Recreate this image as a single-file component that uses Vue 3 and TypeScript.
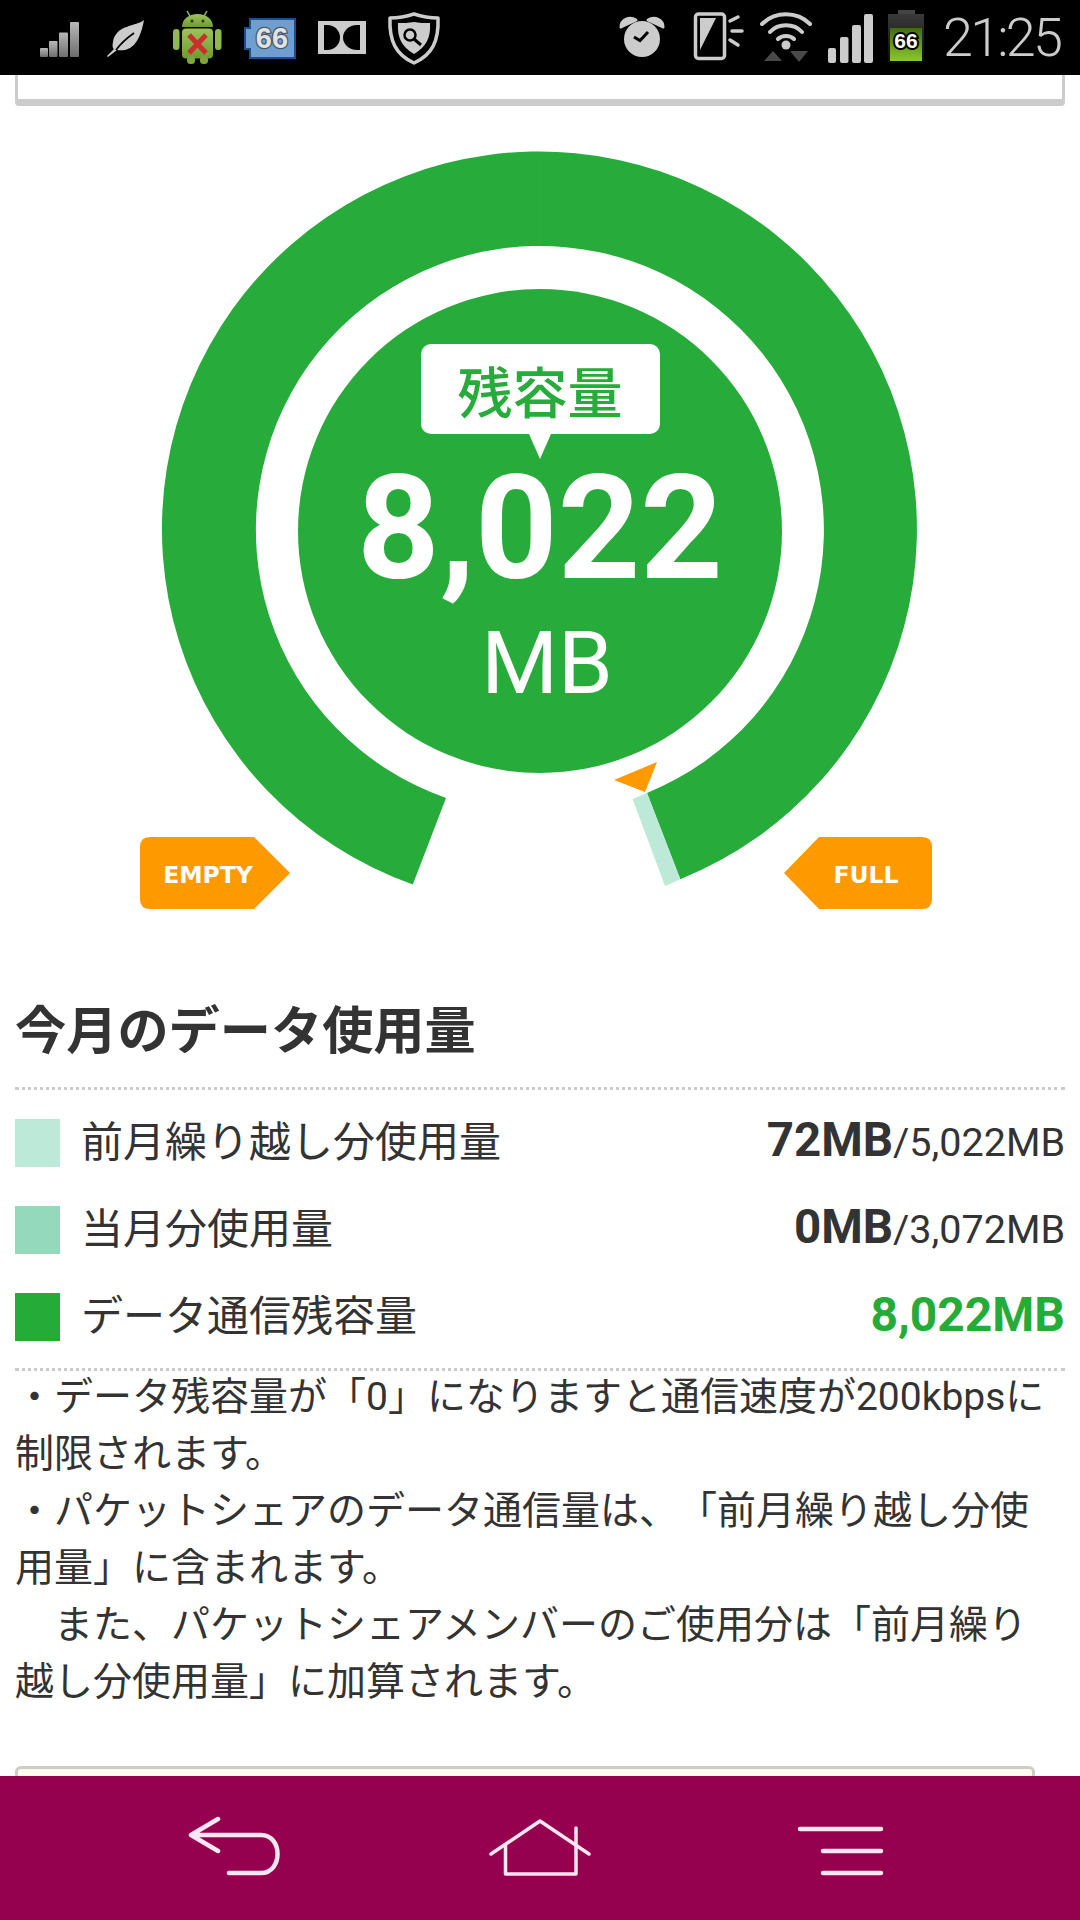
<script setup lang="ts">
interface UsageRow {
  label: string
  color: string
  used: string
  total?: string
}
const rows: UsageRow[] = [
  { label: '前月繰り越し分使用量', color: '#bde9d8', used: '72MB', total: '/5,022MB' },
  { label: '当月分使用量', color: '#95d9bd', used: '0MB', total: '/3,072MB' },
  { label: 'データ通信残容量', color: '#24ab38', used: '8,022MB' },
]
</script>

<template>
  <div class="screen">
    <header class="status">
      <div class="status-group">
        <svg class="cell" viewBox="24 0 72 75" width="72" height="75">
          <defs>
            <linearGradient id="sig" x1="0" y1="0" x2="0" y2="1">
              <stop offset="0" stop-color="#b8b8b8" />
              <stop offset="1" stop-color="#6e6e6e" />
            </linearGradient>
          </defs>
          <rect x="40" y="48" width="8" height="9" rx="1" fill="url(#sig)" />
          <rect x="49" y="41" width="8.5" height="16" rx="1" fill="url(#sig)" />
          <rect x="59" y="32.5" width="9" height="24.5" rx="1" fill="url(#sig)" />
          <rect x="70" y="22" width="9" height="35" rx="1" fill="url(#sig)" />
        </svg>
        <svg class="cell" viewBox="96 0 72 75" width="72" height="75">
          <path d="M144 20C136 27 116 24 113 42C112 46 113 49 114 49L107 56L108 57L117 50C135 53 141 36 144 20Z" fill="#ccc" />
          <path d="M116 50C121 43 127 38 134 33" fill="none" stroke="#000" stroke-width="1.6" />
        </svg>
        <svg class="cell" viewBox="168 0 72 75" width="72" height="75">
          <defs>
            <linearGradient id="droid" x1="0" y1="0" x2="0" y2="1">
              <stop offset="0" stop-color="#9cc45a" />
              <stop offset="1" stop-color="#6f9a35" />
            </linearGradient>
          </defs>
          <path d="M187 11L190 16M207 11L204 16" stroke="#8aa85a" stroke-width="1.5" />
          <path d="M182 27C182 19 189 14 197.5 14C206 14 213 19 213 27Z" fill="url(#droid)" />
          <circle cx="192" cy="21" r="1.5" fill="#2b3a12" />
          <circle cx="203" cy="21" r="1.5" fill="#2b3a12" />
          <rect x="182" y="28.5" width="31" height="30" rx="4" fill="url(#droid)" />
          <rect x="173" y="29" width="6.5" height="21" rx="3.2" fill="#8fb94f" />
          <rect x="215" y="29" width="6.5" height="21" rx="3.2" fill="#8fb94f" />
          <rect x="187" y="56" width="8" height="8" rx="3.5" fill="#7ea43f" />
          <rect x="200" y="56" width="8" height="8" rx="3.5" fill="#7ea43f" />
          <path d="M189 35L206 53M206 35L189 53" stroke="#c9302c" stroke-width="5" />
        </svg>
        <svg class="cell" viewBox="240 0 72 75" width="72" height="75">
          <path d="M250 19H295V58H250V49H245V28H250Z" fill="#6f9fd1" stroke="#1d4e8f" stroke-width="2" />
          <text x="272" y="48" text-anchor="middle" class="badge-num">66</text>
        </svg>
        <svg class="cell" viewBox="312 0 72 75" width="72" height="75">
          <rect x="318" y="21" width="48" height="33" fill="#ccc" />
          <path d="M324 25H327C335 25 340 31 340 37.5C340 44 335 50 327 50H324Z" fill="#000" />
          <path d="M360 25H357C349 25 343 31 343 37.5C343 44 349 50 357 50H360Z" fill="#000" />
        </svg>
        <svg class="cell" viewBox="384 0 72 75" width="72" height="75">
          <path d="M414 14C405 17 398 18 390 18C389 41 396 55 414 63C432 55 439 41 438 18C430 18 423 17 414 14Z" fill="none" stroke="#ccc" stroke-width="3.5" stroke-linejoin="round" />
          <path d="M414 22C409 23 403 23 398 23C397 38 402 47 414 54C426 47 431 38 430 23C425 23 419 23 414 22Z" fill="#ccc" />
          <circle cx="410" cy="35" r="5.5" fill="none" stroke="#000" stroke-width="2.5" />
          <path d="M414 39L421 45" stroke="#000" stroke-width="3" />
        </svg>
      </div>
      <div class="status-group">
        <svg class="cell" viewBox="612 0 72 75" width="72" height="75">
          <circle cx="642" cy="39" r="18" fill="#ccc" />
          <path d="M621 27C621 20 629 16 636 20ZM663 27C663 20 655 16 648 20Z" fill="#ccc" stroke="#ccc" stroke-width="3" stroke-linejoin="round" />
          <path d="M634 37L640 40.5L648 32" fill="none" stroke="#000" stroke-width="3" />
        </svg>
        <svg class="cell" viewBox="684 0 68 75" width="68" height="75">
          <rect x="695.5" y="14" width="29" height="44.5" rx="3" fill="none" stroke="#ccc" stroke-width="3.5" />
          <path d="M700 18H716L700 50Z" fill="#ccc" />
          <path d="M730 21L738 17M732 31H742M730 40L738 45" stroke="#ccc" stroke-width="3.5" stroke-linecap="round" />
        </svg>
        <svg class="cell" viewBox="752 0 68 75" width="68" height="75">
          <path d="M762 24C775 11 797 11 810 24M770 32C778 23 794 23 802 32M778 39C782 35 790 35 794 39" fill="none" stroke="#ccc" stroke-width="4" stroke-linecap="round" />
          <circle cx="786" cy="45" r="4.5" fill="#ccc" />
          <path d="M764 61H782L773 51Z" fill="#4a4a4a" />
          <path d="M790 51H808L799 62Z" fill="#4a4a4a" />
        </svg>
        <svg class="cell" viewBox="820 0 60 75" width="60" height="75">
          <rect x="828" y="48" width="8" height="15" rx="2" fill="#ccc" />
          <rect x="840" y="37" width="8.5" height="26" rx="2" fill="#ccc" />
          <rect x="852" y="25" width="9" height="38" rx="2" fill="#ccc" />
          <rect x="864" y="14" width="9" height="49" rx="2" fill="#ccc" />
        </svg>
        <svg class="cell" viewBox="880 0 50 75" width="50" height="75">
          <defs>
            <linearGradient id="cellTop" x1="0" y1="0" x2="0" y2="1">
              <stop offset="0" stop-color="#3a3a3a" />
              <stop offset="1" stop-color="#0a0a0a" />
            </linearGradient>
            <linearGradient id="cellLow" x1="0" y1="0" x2="0" y2="1">
              <stop offset="0" stop-color="#3f6b10" />
              <stop offset="1" stop-color="#8cc82c" />
            </linearGradient>
          </defs>
          <rect x="898" y="10" width="17" height="5" fill="#444" />
          <rect x="888" y="14" width="36" height="49" fill="url(#cellTop)" />
          <rect x="890" y="28" width="32" height="33" fill="url(#cellLow)" />
          <text x="906" y="48" text-anchor="middle" class="cell-num">66</text>
        </svg>
        <span class="time">21:25</span>
      </div>
    </header>

    <main class="page">
      <div class="prev-card"></div>

      <section class="gauge">
        <svg class="gauge-art" viewBox="0 106 1080 884" width="1080" height="884">
          <path d="M412.8 884.6A377.5 377.5 0 1 1 680.3 879.2L647 793A284 284 0 1 0 446 798Z" fill="#27ab3a" />
          <path d="M540 153V244" stroke="#2cad3f" stroke-width="1" />
          <circle cx="540" cy="531" r="242" fill="#27ab3a" />
          <path d="M632.6 799L647 793L680.3 879.2L665 886Z" fill="#bde9d8" />
          <path d="M614 780L657 762L645 792Z" fill="#ff9900" />
          <path d="M150 837H254L290 873L254 909H150Q140 909 140 899V847Q140 837 150 837Z" fill="#ff9900" />
          <path d="M922 837H819L784 873L819 909H922Q932 909 932 899V847Q932 837 922 837Z" fill="#ff9900" />
          <text x="208" y="883" text-anchor="middle" class="flag">EMPTY</text>
          <text x="866" y="883" text-anchor="middle" class="flag">FULL</text>
        </svg>
        <div class="gauge-center">
          <div class="bubble">残容量</div>
          <div class="big">8,022</div>
          <div class="unit">MB</div>
        </div>
      </section>

      <h2 class="title">今月のデータ使用量</h2>

      <ul class="usage">
        <li v-for="row in rows" :key="row.label" class="usage-row">
          <span class="swatch" :style="{ background: row.color }"></span>
          <span class="label">{{ row.label }}</span>
          <span class="value">
            <b :class="{ remain: !row.total }">{{ row.used }}</b><small v-if="row.total">{{ row.total }}</small>
          </span>
        </li>
      </ul>

      <div class="notes">
        <p>・データ残容量が「0」になりますと通信速度が200kbpsに制限されます。</p>
        <p>・パケットシェアのデータ通信量は、「前月繰り越し分使用量」に含まれます。</p>
        <p>　また、パケットシェアメンバーのご使用分は「前月繰り越し分使用量」に加算されます。</p>
      </div>

      <div class="next-card"></div>
    </main>

    <nav class="nav">
      <svg viewBox="184 1816 100 64" width="100" height="64">
        <path d="M218 1819L191 1835L218 1851M191 1835H261C283 1835 283 1873 261 1873H229" class="nav-stroke" />
      </svg>
      <svg viewBox="485 1816 110 64" width="110" height="64">
        <path d="M491 1854L540 1821L589 1854" class="nav-stroke thin" />
        <path d="M505.5 1845V1874H576V1828" class="nav-stroke thin" />
      </svg>
      <svg viewBox="796 1816 92 64" width="92" height="64">
        <path d="M800 1829H881M823 1851H881M823 1873H881" class="nav-stroke" />
      </svg>
    </nav>
  </div>
</template>

<style>
html,
body {
  margin: 0;
  background: #fff;
}
</style>

<style scoped>
.screen {
  width: 1080px;
  height: 1920px;
  display: flex;
  flex-direction: column;
  overflow: hidden;
  background: #fff;
  color: #333;
  font-family: "Noto Sans CJK JP", Roboto, sans-serif;
}

.status {
  flex: 0 0 75px;
  display: flex;
  justify-content: space-between;
  padding-left: 24px;
  padding-right: 21px;
  background: #000;
}
.status-group {
  display: flex;
  align-items: center;
}
.cell {
  display: block;
}
.badge-num {
  font: 700 29px "Liberation Sans", sans-serif;
  fill: #dfe3e8;
  stroke: #4d5660;
  stroke-width: 2.5px;
  paint-order: stroke;
}
.cell-num {
  font: 700 21px "Liberation Sans", sans-serif;
  fill: #fff;
  stroke: #000;
  stroke-width: 4px;
  paint-order: stroke;
}
.time {
  margin-left: 13px;
  width: 116px;
  font: 300 54px Roboto, sans-serif;
  letter-spacing: -2.8px;
  color: #ccc;
  white-space: nowrap;
}

.page {
  flex: 1;
  min-height: 0;
  overflow: hidden;
}
.prev-card {
  height: 24px;
  margin: 0 15px;
  border: solid #ccc;
  border-width: 0 3px 7px;
  border-radius: 0 0 4px 4px;
  box-sizing: content-box;
}

.gauge {
  position: relative;
  height: 884px;
}
.gauge-art {
  display: block;
}
.flag {
  font: 700 23.5px "DejaVu Sans", sans-serif;
  fill: #fff;
}
.gauge-center {
  position: absolute;
  top: 238px;
  left: 0;
  right: 0;
  display: flex;
  flex-direction: column;
  align-items: center;
  color: #fff;
}
.bubble {
  position: relative;
  width: 239px;
  height: 90px;
  border-radius: 10px;
  background: #fff;
  color: #27ab3a;
  font-size: 55px;
  font-weight: 500;
  line-height: 90px;
  text-align: center;
}
.bubble::after {
  content: "";
  position: absolute;
  top: 90px;
  left: 108px;
  border-style: solid;
  border-width: 25px 11px 0;
  border-color: #fff transparent transparent;
}
.big {
  margin-top: 40px;
  font: 700 144px/110px Roboto, sans-serif;
}
.unit {
  margin-top: 35px;
  padding-left: 14px;
  font: 400 88px/88px Roboto, sans-serif;
}

.title {
  margin: 0;
  padding: 0 15px;
  height: 97px;
  font-size: 51.2px;
  font-weight: 700;
  line-height: 75px;
  white-space: nowrap;
}

.usage {
  list-style: none;
  margin: 0 15px;
  padding: 9px 0 8px;
  border-top: 3px dotted #ccc;
  border-bottom: 3px dotted #ccc;
}
.usage-row {
  display: flex;
  align-items: center;
  height: 87px;
}
.swatch {
  flex: 0 0 45px;
  height: 48px;
}
.label {
  margin-left: 21px;
  margin-top: -9px;
  font-size: 42px;
  white-space: nowrap;
}
.value {
  margin-left: auto;
  margin-top: -5px;
  font-family: Roboto, sans-serif;
  white-space: nowrap;
}
.value b {
  font-size: 47.5px;
  font-weight: 700;
}
.value b.remain {
  font-size: 48px;
  color: #24ab38;
}
.value small {
  font-size: 39.5px;
  font-weight: 400;
}

.notes {
  margin-top: -2px;
  padding: 0 15px;
  font-family: Roboto, "Noto Sans CJK JP", sans-serif;
  font-size: 39px;
  line-height: 57px;
  text-spacing-trim: space-all;
}
.notes p {
  margin: 0;
}

.next-card {
  margin: 55px 45px 0 15px;
  height: 60px;
  border: 3px solid #cdcdc6;
  border-radius: 6px;
  background: #fbfbf0;
}

.nav {
  flex: 0 0 144px;
  display: flex;
  align-items: center;
  justify-content: space-between;
  padding: 0 192px 0 184px;
  background: #95004f;
}
.nav-stroke {
  fill: none;
  stroke: #fbe6f2;
  stroke-width: 4.5;
  stroke-linecap: round;
  stroke-linejoin: round;
}
.nav-stroke.thin {
  stroke-width: 3.5;
}
</style>
